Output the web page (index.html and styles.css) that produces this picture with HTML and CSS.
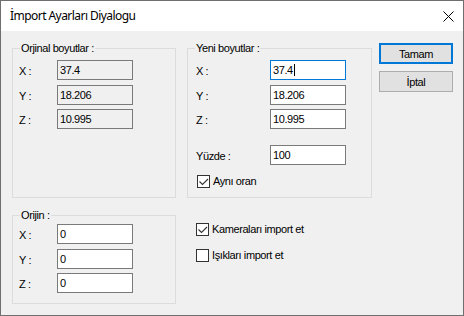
FILE: index.html
```html
<!DOCTYPE html>
<html lang="tr">
<head>
<meta charset="utf-8">
<title>İmport Ayarları Diyalogu</title>
<link rel="stylesheet" href="styles.css">
</head>
<body>
<div class="window">
  <div class="titlebar">
    <span class="title">İmport Ayarları Diyalogu</span>
    <svg class="close" width="11" height="11" viewBox="0 0 11 11"><path d="M0.5 0.5 L10.5 10.5 M10.5 0.5 L0.5 10.5" stroke="#000" stroke-width="1" fill="none"/></svg>
  </div>
  <div class="content">
    <div class="col col-left">
      <div class="group g-orig">
        <span class="legend">Orjinal boyutlar :</span>
        <div class="row"><span class="lbl">X :</span><div class="edit ro">37.4</div></div>
        <div class="row r2"><span class="lbl">Y :</span><div class="edit ro">18.206</div></div>
        <div class="row r3"><span class="lbl">Z :</span><div class="edit ro">10.995</div></div>
      </div>
      <div class="group g-origin">
        <span class="legend">Orijin :</span>
        <div class="row"><span class="lbl">X :</span><div class="edit">0</div></div>
        <div class="row r2"><span class="lbl">Y :</span><div class="edit">0</div></div>
        <div class="row r3"><span class="lbl">Z :</span><div class="edit">0</div></div>
      </div>
    </div>
    <div class="col col-mid">
      <div class="group g-new">
        <span class="legend">Yeni boyutlar :</span>
        <div class="row"><span class="lbl wide">X :</span><div class="edit focus">37.4<span class="caret"></span></div></div>
        <div class="row r2"><span class="lbl wide">Y :</span><div class="edit">18.206</div></div>
        <div class="row r3"><span class="lbl wide">Z :</span><div class="edit">10.995</div></div>
        <div class="row r4"><span class="lbl wide">Yüzde :</span><div class="edit">100</div></div>
        <label class="chk in-group"><span class="box"><svg width="11" height="11" viewBox="0 0 11 11"><path d="M1.5 5.5 L4.5 8.5 L10 3" stroke="#333" stroke-width="1.1" fill="none"/></svg></span><span class="chk-text">Aynı oran</span></label>
      </div>
      <div class="checks">
        <label class="chk"><span class="box"><svg width="11" height="11" viewBox="0 0 11 11"><path d="M1.5 5.5 L4.5 8.5 L10 3" stroke="#333" stroke-width="1.1" fill="none"/></svg></span><span class="chk-text">Kameraları import et</span></label>
        <label class="chk"><span class="box"></span><span class="chk-text">Işıkları import et</span></label>
      </div>
    </div>
    <div class="col col-btn">
      <button class="btn default">Tamam</button>
      <button class="btn">İptal</button>
    </div>
  </div>
</div>
</body>
</html>
```
FILE: styles.css
```css
html, body {
  margin: 0;
  padding: 0;
}

.window {
  width: 464px;
  height: 316px;
  box-sizing: border-box;
  border: 1px solid #6f6f6f;
  display: flex;
  flex-direction: column;
  font-family: "Liberation Sans", Arial, sans-serif;
  font-size: 11px;
  letter-spacing: -0.4px;
  color: #000;
  background: #f0f0f0;
}

.titlebar {
  height: 30px;
  flex: none;
  background: #fff;
  display: flex;
  align-items: center;
  justify-content: space-between;
  padding: 0 9px 0 9px;
}

.title {
  font-family: "Noto Sans", "Open Sans", sans-serif;
  font-size: 12px;
  letter-spacing: -0.55px;
  line-height: 16px;
}

.close {
  display: block;
}

.content {
  flex: 1;
  display: flex;
  align-items: flex-start;
  padding-left: 11px;
}

.col-left {
  width: 164px;
  padding-top: 17px;
  display: flex;
  flex-direction: column;
  gap: 17px;
}

.col-mid {
  width: 185px;
  margin-left: 11px;
  padding-top: 17px;
}

.col-btn {
  width: 74px;
  margin-left: 7px;
  padding-top: 12px;
  display: flex;
  flex-direction: column;
  gap: 7px;
}

.group {
  position: relative;
  box-sizing: border-box;
  border: 1px solid #dcdcdc;
}

.g-orig {
  height: 150px;
  padding: 11px 0 0 6px;
}

.g-origin {
  height: 89px;
  padding: 8px 0 0 6px;
}

.g-new {
  height: 150px;
  padding: 11px 0 0 8px;
}

.legend {
  position: absolute;
  top: -7px;
  left: 7px;
  padding: 0 1px;
  line-height: 13px;
  background: #f0f0f0;
  white-space: nowrap;
}

.row {
  display: flex;
  align-items: flex-start;
  height: 20px;
}

.r2 { margin-top: 5px; }
.r3 { margin-top: 4px; }
.r4 { margin-top: 16px; }

.lbl {
  width: 38px;
  padding-top: 5px;
  line-height: 13px;
  white-space: nowrap;
}

.lbl.wide {
  width: 74px;
}

.edit {
  width: 76px;
  height: 20px;
  box-sizing: border-box;
  border: 1px solid #7a7a7a;
  background: #fff;
  padding: 0 2px;
  line-height: 18px;
  white-space: nowrap;
}

.edit.ro {
  background: #f0f0f0;
}

.edit.focus {
  border-color: #0078d7;
}

.caret {
  display: inline-block;
  width: 1px;
  height: 12px;
  background: #000;
  vertical-align: -2px;
  margin-left: 1px;
}

.chk {
  display: flex;
  align-items: center;
  height: 13px;
}

.chk.in-group {
  margin-top: 10px;
  padding-left: 1px;
}

.box {
  width: 13px;
  height: 13px;
  box-sizing: border-box;
  border: 1px solid #333;
  background: #fff;
  display: flex;
  align-items: center;
  justify-content: center;
}

.box svg {
  display: block;
}

.chk-text {
  margin-left: 3px;
  line-height: 13px;
  white-space: nowrap;
}

.checks {
  margin-top: 25px;
  padding-left: 9px;
  display: flex;
  flex-direction: column;
  gap: 13px;
}

.btn {
  width: 74px;
  height: 21px;
  box-sizing: border-box;
  border: 1px solid #adadad;
  background: #e1e1e1;
  font: inherit;
  letter-spacing: inherit;
  color: #000;
  padding: 0;
  margin: 0;
}

.btn.default {
  border: 2px solid #0078d7;
}
```
